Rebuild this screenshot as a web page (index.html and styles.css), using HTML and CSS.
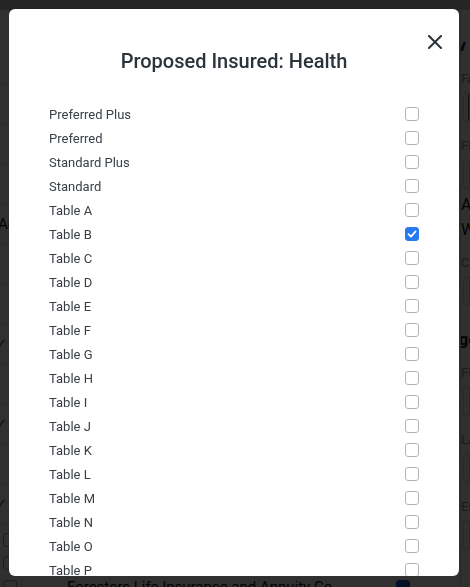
FILE: index.html
```html
<!DOCTYPE html>
<html lang="en">
<head>
<meta charset="utf-8">
<title>Proposed Insured: Health</title>
<link rel="stylesheet" href="styles.css">
</head>
<body>
<div class="page">
  <div class="topbar"></div>
  <div class="page-body">
    <div class="left-col">
      <div class="bg-row bg-row-tall"></div>
      <div class="bg-row"></div>
      <div class="bg-row"></div>
      <div class="bg-row"></div>
      <div class="bg-row"><span class="bg-text">Age</span></div>
      <div class="bg-row"></div>
      <div class="bg-row"></div>
      <div class="bg-row"><span class="bg-check">✓</span></div>
      <div class="bg-row"></div>
      <div class="bg-row"><span class="bg-check">✓</span></div>
      <div class="bg-row"></div>
      <div class="bg-row"><span class="bg-check">✓</span></div>
      <div class="bg-boxes">
        <span class="bg-box"></span>
        <span class="bg-box"></span>
      </div>
      <div class="bg-company">
        <span class="bg-box"></span>
        <span class="bg-company-name">Foresters Life Insurance and Annuity Co.</span>
        <span class="bg-box bg-box-checked"></span>
      </div>
    </div>
    <div class="right-col">
      <div class="rc-heading">Prov</div>
      <div class="rc-label">FA</div>
      <div class="rc-field rc-field-green"></div>
      <div class="rc-label">FL</div>
      <div class="rc-field"></div>
      <div class="rc-text">Ac</div>
      <div class="rc-text">W</div>
      <div class="rc-label">CI</div>
      <div class="rc-field"></div>
      <div class="rc-heading rc-heading-2">ge</div>
      <div class="rc-label">FI</div>
      <div class="rc-field"></div>
      <div class="rc-label">LA</div>
      <div class="rc-field"></div>
      <div class="rc-label">EM</div>
      <div class="rc-field"></div>
    </div>
  </div>
</div>

<div class="overlay"></div>

<div class="modal" role="dialog" aria-label="Proposed Insured: Health">
  <button class="close" aria-label="Close">
    <svg width="14" height="14" viewBox="0 0 14 14"><path d="M1 1 L13 13 M13 1 L1 13" stroke="#2b333b" stroke-width="2" stroke-linecap="square" fill="none"/></svg>
  </button>
  <h2 class="title">Proposed Insured: Health</h2>
  <ul class="options">
    <li class="option"><span>Preferred Plus</span><span class="cb"></span></li>
    <li class="option"><span>Preferred</span><span class="cb"></span></li>
    <li class="option"><span>Standard Plus</span><span class="cb"></span></li>
    <li class="option"><span>Standard</span><span class="cb"></span></li>
    <li class="option"><span>Table A</span><span class="cb"></span></li>
    <li class="option"><span>Table B</span><span class="cb cb-checked"><svg width="10" height="10" viewBox="0 0 10 10"><path d="M1.5 5.2 L4 7.6 L8.6 2.4" stroke="#fff" stroke-width="1.7" fill="none" stroke-linecap="round" stroke-linejoin="round"/></svg></span></li>
    <li class="option"><span>Table C</span><span class="cb"></span></li>
    <li class="option"><span>Table D</span><span class="cb"></span></li>
    <li class="option"><span>Table E</span><span class="cb"></span></li>
    <li class="option"><span>Table F</span><span class="cb"></span></li>
    <li class="option"><span>Table G</span><span class="cb"></span></li>
    <li class="option"><span>Table H</span><span class="cb"></span></li>
    <li class="option"><span>Table I</span><span class="cb"></span></li>
    <li class="option"><span>Table J</span><span class="cb"></span></li>
    <li class="option"><span>Table K</span><span class="cb"></span></li>
    <li class="option"><span>Table L</span><span class="cb"></span></li>
    <li class="option"><span>Table M</span><span class="cb"></span></li>
    <li class="option"><span>Table N</span><span class="cb"></span></li>
    <li class="option"><span>Table O</span><span class="cb"></span></li>
    <li class="option"><span>Table P</span><span class="cb"></span></li>
  </ul>
</div>
</body>
</html>
```

FILE: styles.css
```css
* { box-sizing: border-box; }

html, body {
  margin: 0;
  padding: 0;
  height: 100%;
  overflow: hidden;
}

body {
  font-family: Roboto, "Liberation Sans", Arial, sans-serif;
  background: #ffffff;
  color: #222;
}

/* ---------- background page ---------- */
.page {
  height: 587px;
  overflow: hidden;
}

.topbar {
  height: 10px;
  background: #c4c4c4;
}

.page-body {
  display: flex;
  height: 577px;
}

.left-col {
  width: 460px;
  flex: none;
  display: flex;
  flex-direction: column;
}

.bg-row {
  height: 40px;
  flex: none;
  border-bottom: 1px solid #dcdcdc;
  display: flex;
  align-items: center;
  font-size: 15px;
}

.bg-row-tall {
  height: 74px;
}

.bg-text {
  margin-left: -2px;
  color: #111;
}

.bg-check {
  margin-left: -4px;
  color: #333;
  font-size: 13px;
}

.bg-boxes {
  display: flex;
  flex-direction: column;
  gap: 9px;
  padding: 9px 0 0 3px;
}

.bg-box {
  display: block;
  width: 14px;
  height: 14px;
  border: 1px solid #999;
  border-radius: 3px;
  flex: none;
}

.bg-box-checked {
  background: #1a56c8;
  border-color: #1a56c8;
  margin-left: auto;
  margin-right: 50px;
}

.bg-company {
  display: flex;
  align-items: center;
  padding: 8px 0 0 3px;
  font-size: 15px;
  white-space: nowrap;
}

.bg-company-name {
  margin-left: 50px;
  color: #111;
}

.right-col {
  flex: 1;
  border-left: 1px solid #d6d6d6;
  display: flex;
  flex-direction: column;
  overflow: hidden;
  white-space: nowrap;
}

.rc-heading {
  font-weight: 700;
  font-size: 16px;
  margin: 26px 0 0 -28px;
  color: #111;
}

.rc-heading-2 {
  margin: 24px 0 0 -2px;
}

.rc-label {
  font-size: 13px;
  color: #888;
  margin: 16px 0 0 0;
}

.rc-text {
  font-size: 16px;
  color: #111;
  margin: 6px 0 0 0;
}

.rc-field {
  height: 30px;
  flex: none;
  border: 1px solid #cfcfcf;
  border-radius: 4px;
  margin: 6px 0 0 2px;
}

.rc-field-green {
  background: linear-gradient(90deg, #ffffff 0 4px, #3d7a3d 4px 7px, #ffffff 7px);
}

/* ---------- overlay ---------- */
.overlay {
  position: fixed;
  inset: 0;
  background: rgba(0, 0, 0, 0.81);
}

/* ---------- modal ---------- */
.modal {
  position: fixed;
  top: 9px;
  left: 9px;
  width: 450px;
  height: 567px;
  background: #ffffff;
  border-radius: 6px;
  overflow: hidden;
  padding: 40px 40px 0 40px;
}

.close {
  position: absolute;
  top: 26px;
  right: 17px;
  width: 14px;
  height: 14px;
  padding: 0;
  border: 0;
  background: transparent;
  display: flex;
  cursor: pointer;
}

.title {
  margin: 0;
  font-size: 20px;
  line-height: 24px;
  font-weight: 500;
  text-align: center;
  color: #2b333b;
}

.options {
  list-style: none;
  margin: 29px 0 0 0;
  padding: 0;
}

.option {
  height: 24px;
  display: flex;
  align-items: center;
  justify-content: space-between;
  font-size: 13px;
  color: #3a4047;
}

.cb {
  width: 14px;
  height: 14px;
  border: 1px solid #b4b4b4;
  border-radius: 3px;
  display: flex;
  align-items: center;
  justify-content: center;
  background: #fff;
}

.cb-checked {
  background: #2979f2;
  border-color: #2979f2;
}
```
